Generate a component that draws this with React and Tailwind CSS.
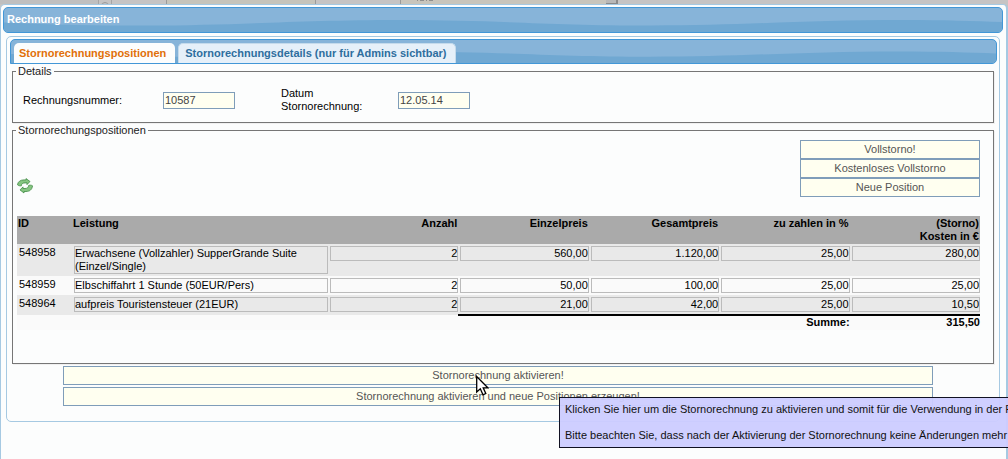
import React from "react";

const rows = [
  { id: "548958", name: "Erwachsene (Vollzahler) SupperGrande Suite (Einzel/Single)", values: ["2", "560,00", "1.120,00", "25,00", "280,00"] },
  { id: "548959", name: "Elbschiffahrt 1 Stunde (50EUR/Pers)", values: ["2", "50,00", "100,00", "25,00", "25,00"] },
  { id: "548964", name: "aufpreis Touristensteuer (21EUR)", values: ["2", "21,00", "42,00", "25,00", "10,50"] },
];

function Wave() {
  return (
    <svg className="absolute inset-0 h-full w-full" viewBox="0 0 987 24" preserveAspectRatio="none" aria-hidden="true">
      <path d="M0 14.5 C50 17 90 17.500 140 17.500 C230 17.500 290 12 390 12 C490 12 540 17.500 640 17.500 C730 17.500 790 12 890 12 C930 12 960 13 987 14 V24 H0Z" fill="#70a8d2" />
    </svg>
  );
}

function ActionButton({ children }) {
  return (
    <button type="button" className="block h-[19px] w-full border border-[#7f9db9] bg-[#fffff0] text-center text-[#555555]">
      {children}
    </button>
  );
}

function RefreshIcon() {
  return (
    <svg width="16" height="16" viewBox="0 0 16 16" stroke="#3f8a42" strokeWidth="0.8" strokeLinejoin="round" fill="#86c581" aria-hidden="true">
      <path d="M0.500 6.800 C0.900 3.500 3.500 1.900 7 1.900 H9 V0.600 L13 3.500 L10 6.600 V4.900 H8 C5.800 4.900 4.600 5.600 4.300 7.800 C3 8 1.400 7.700 0.500 6.800Z" />
      <path d="M15.500 7.800 C15.100 11.800 12.500 13.500 9 13.500 H7 V15 L3 11.900 L6 8.900 V10.500 H8 C10.200 10.500 11.400 9.600 11.700 7.400 C13 7 14.600 7.100 15.500 7.800Z" />
    </svg>
  );
}

function Field({ id, label, value, labelClass }) {
  return (
    <div className="flex items-center">
      <label htmlFor={id} className={labelClass}>{label}</label>
      <input id={id} defaultValue={value} className="h-[17px] w-[72px] border border-[#7f9db9] bg-[#fffff0] px-px text-[#444444] outline-none" />
    </div>
  );
}

function Positions() {
  return (
    <table className="w-full table-fixed border-collapse text-black">
      <colgroup>
        <col className="w-[55px]" />
        <col className="w-[256px]" />
        <col /><col /><col /><col /><col />
      </colgroup>
      <thead>
        <tr className="bg-[#aaaaaa] text-right align-top">
          <th className="p-px text-left">ID</th>
          <th className="p-px text-left">Leistung</th>
          <th className="p-px">Anzahl</th>
          <th className="p-px">Einzelpreis</th>
          <th className="p-px">Gesamtpreis</th>
          <th className="p-px">zu zahlen in %</th>
          <th className="p-px">(Storno)<br />Kosten in €</th>
        </tr>
      </thead>
      <tbody>
        {rows.map((row) => (
          <tr key={row.id} className="align-top odd:bg-[#e9e9e9] even:bg-[#fafafa]">
            <td className="py-0.5 pl-0.5">{row.id}</td>
            <td className="py-0.5 pl-0.5"><div className="border border-[#bbbbbb]">{row.name}</div></td>
            {row.values.map((value, i) => (
              <td key={i} className="py-0.5 pl-0.5"><div className="border border-[#bbbbbb] text-right">{value}</div></td>
            ))}
          </tr>
        ))}
      </tbody>
      <tfoot>
        <tr className="bg-[#fafafa] text-right font-bold">
          <td colSpan={3} />
          <td className="border-t-2 border-black" />
          <td className="border-t-2 border-black" />
          <td className="border-t-2 border-black pb-px">Summe:</td>
          <td className="border-t-2 border-black pb-px">315,50</td>
        </tr>
      </tfoot>
    </table>
  );
}

export default function App() {
  return (
    <div className="relative flex min-h-screen flex-col overflow-hidden bg-[#c6c4c2] font-['Liberation_Sans',Arial,sans-serif] text-[11px] leading-[13px] text-[#222222]">
      <div className="flex h-1 items-start overflow-hidden bg-[#c6c4c4]" aria-hidden="true">
        <div className="h-1 w-[98px] bg-[#bfbfbf]" />
        <div className="flex h-1 w-[14px] items-start justify-center border-x border-[#a5a5a5] pt-0.5">
          <div className="h-2 w-2 shrink-0 rounded-full border border-[#999999]" />
        </div>
        <div className="h-1 w-[54px]" />
        <div className="h-1 w-[150px] border-x border-[#9a9a9a] bg-[#c6c4bb]" />
        <div className="h-1 w-[84px]" />
        <div className="flex h-1 w-[206px] gap-0.5 border-l border-[#9a9a9a] bg-[#c8c5bc] pl-4">
          <div className="h-px w-px bg-[#8f8f8f]" />
          <div className="h-px w-1 bg-[#8f8f8f]" />
          <div className="h-px w-px bg-[#8f8f8f]" />
          <div className="h-px w-1 bg-[#8f8f8f]" />
        </div>
        <div className="h-1 w-3 border-r-2 border-b border-[#8a8a8a] bg-[#b8b8b8]" />
      </div>
      <main className="flex-1 rounded-t-[5px] border border-r-2 border-b-0 border-[#a6c9e2] bg-[#fcfdfd] px-0.5 pt-0.5">
        <header className="relative mr-px h-[26px] overflow-hidden rounded-[5px] border border-[#4297d7] bg-[#87b4d9]">
          <Wave />
          <h1 className="relative px-[3px] py-[5px] text-[11px] leading-[13px] font-bold text-white">Rechnung bearbeiten</h1>
        </header>
        <div className="mt-[3px] mr-1 ml-[3px] rounded-[5px] border border-[#a6c9e2] pt-0.5 pr-0.5 pb-[15px] pl-[3px]">
          <nav className="relative h-[25px] overflow-hidden rounded-[5px] rounded-bl-none border border-[#4297d7] bg-[#87b4d9]">
            <Wave />
            <div className="relative flex gap-[3px] px-[3px] pt-[3px]">
              <a href="#positionen" className="h-[21px] rounded-t-[5px] bg-[#fcfdfd] pt-1 pr-[9px] pl-[5px] font-bold text-[#e17009]">Stornorechnungspositionen</a>
              <a href="#details" className="h-5 rounded-t-[5px] border border-b-0 border-[#c5dbec] bg-[#e6f0f9] pt-[3px] pr-[9px] pl-1.5 font-bold text-[#2e6e9e]">Stornorechnungsdetails (nur für Admins sichtbar)</a>
            </div>
          </nav>
          <div className="mr-[3px] ml-0.5">
            <fieldset className="mt-px h-[58px] border border-[#767676] px-[10px] shadow-[1px_1px_0_#f0f0f0]">
              <legend className="-ml-[7px] px-0.5">Details</legend>
              <div className="flex gap-[46px] pt-[9px] text-black">
                <Field id="nummer" label="Rechnungsnummer:" value="10587" labelClass="w-[140px]" />
                <Field id="datum" label={<>Datum<br />Stornorechnung:</>} value="12.05.14" labelClass="w-[117px]" />
              </div>
            </fieldset>
            <fieldset className="mt-px border border-[#767676] pr-[13px] pb-[33px] pl-1 shadow-[1px_1px_0_#f0f0f0]">
              <legend className="-ml-px px-0.5">Stornorechungspositionen</legend>
              <div className="flex items-end justify-between pt-[3px] pb-[19px]">
                <button type="button" aria-label="Aktualisieren" className="flex h-[19px] items-start"><RefreshIcon /></button>
                <div className="w-[180px]">
                  <ActionButton>Vollstorno!</ActionButton>
                  <ActionButton>Kostenloses Vollstorno</ActionButton>
                  <ActionButton>Neue Position</ActionButton>
                </div>
              </div>
              <Positions />
            </fieldset>
          </div>
          <div className="mt-0.5 mr-16 ml-[53px] flex flex-col gap-0.5">
            <ActionButton>Stornorechnung aktivieren!</ActionButton>
            <ActionButton>Stornorechnung aktivieren und neue Positionen erzeugen!</ActionButton>
          </div>
        </div>
      </main>
      <div role="tooltip" className="absolute top-[397px] right-0 left-[559px] border border-r-0 border-[#111122] bg-[#ccccff]/95 py-[5px] pl-[5px] whitespace-nowrap text-[#111111]">
        <p>Klicken Sie hier um die Stornorechnung zu aktivieren und somit für die Verwendung in der Re</p>
        <p className="mt-[13px]">Bitte beachten Sie, dass nach der Aktivierung der Stornorechnung keine Änderungen mehr a</p>
      </div>
      <svg className="absolute top-[375px] left-[476px]" width="13" height="21" viewBox="0 0 13 21" aria-hidden="true">
        <path d="M0.700 1.500 V17 L4.300 13.800 L7 19.800 L9.800 18.500 L7.200 12.800 H11.800Z" fill="white" stroke="black" strokeWidth="1.3" />
      </svg>
    </div>
  );
}
